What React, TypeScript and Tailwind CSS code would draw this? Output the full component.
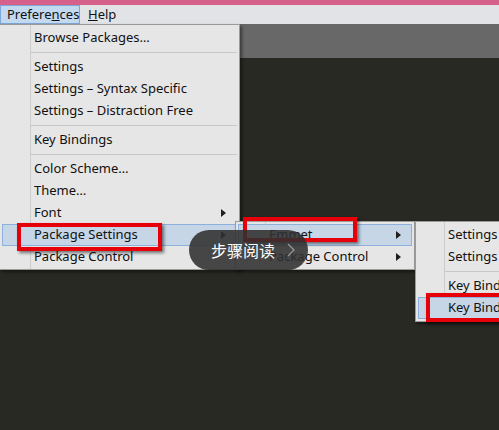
import React from 'react';

type Item =
  | { kind: 'sep' }
  | { kind: 'item'; label: string; arrow?: boolean; active?: boolean };

const Arrow: React.FC = () => (
  <svg width="5" height="8" viewBox="0 0 5 8" className="absolute right-[10px] top-1/2 -translate-y-1/2">
    <path d="M0 0 L5 4 L0 8 Z" fill="#1f1f1f" />
  </svg>
);

const Menu: React.FC<{ items: Item[]; col: number; className: string }> = ({ items, col, className }) => (
  <div className={`absolute bg-[#e6e6e6] border border-[#9a9a9a] shadow-[2px_2px_3px_rgba(0,0,0,0.45)] ${className}`}>
    {/* icon column divider */}
    <div className="absolute top-0 bottom-0 w-px bg-[#cdcdcd]" style={{ left: col }} />
    {items.map((it, i) =>
      it.kind === 'sep' ? (
        <div key={i} className="h-[7px] flex items-center mr-[2px]" style={{ marginLeft: col }}>
          <div className="h-px w-full bg-[#c8c8c8]" />
        </div>
      ) : (
        <div
          key={i}
          className={`relative h-[22px] flex items-center mx-[2px] ${
            it.active ? 'bg-[#c6d6e7] border border-[#8db0dc]' : 'border border-transparent'
          }`}
          style={{ paddingLeft: col + 1 }}
        >
          <span className="whitespace-nowrap">{it.label}</span>
          {it.arrow && <Arrow />}
        </div>
      )
    )}
  </div>
);

const mainItems: Item[] = [
  { kind: 'item', label: 'Browse Packages…' },
  { kind: 'sep' },
  { kind: 'item', label: 'Settings' },
  { kind: 'item', label: 'Settings – Syntax Specific' },
  { kind: 'item', label: 'Settings – Distraction Free' },
  { kind: 'sep' },
  { kind: 'item', label: 'Key Bindings' },
  { kind: 'sep' },
  { kind: 'item', label: 'Color Scheme…' },
  { kind: 'item', label: 'Theme…' },
  { kind: 'item', label: 'Font', arrow: true },
  { kind: 'item', label: 'Package Settings', arrow: true, active: true },
  { kind: 'item', label: 'Package Control' },
];

const subItems: Item[] = [
  { kind: 'item', label: 'Emmet', arrow: true, active: true },
  { kind: 'item', label: 'Package Control', arrow: true },
];

const emmetItems: Item[] = [
  { kind: 'item', label: 'Settings – Default' },
  { kind: 'item', label: 'Settings – User' },
  { kind: 'sep' },
  { kind: 'item', label: 'Key Bindings – Default' },
  { kind: 'item', label: 'Key Bindings – User', active: true },
];

const App: React.FC = () => {
  return (
    <div className="relative w-[499px] h-[430px] overflow-hidden bg-[#282923] text-[13px] text-[#111] font-['Segoe_UI','Noto_Sans',sans-serif] flex flex-col">
      {/* title strip */}
      <div className="h-[5px] bg-[#d5618b]" />
      {/* menubar */}
      <div className="h-[19px] bg-[#e2e3e7] flex items-stretch">
        <div className="w-[80px] bg-[#c3d9f0] border border-[#7fa8d6] flex items-center pl-[6px]">
          Prefere<span className="underline">n</span>ces
        </div>
        <div className="flex items-center pl-[8px]">
          <span className="underline">H</span>elp
        </div>
      </div>
      {/* tab band */}
      <div className="h-[34px] bg-[#686868]" />
      {/* editor */}
      <div className="flex-1 bg-[#282923]" />

      <Menu items={mainItems} col={30} className="left-[-1px] top-[24px] w-[241px] pt-[2px] pb-[1px]" />
      <Menu items={subItems} col={29} className="left-[235px] top-[221px] w-[180px] pt-[2px] pb-[1px]" />
      <Menu items={emmetItems} col={28} className="left-[415px] top-[221px] w-[170px] pt-[2px] pb-[2px]" />

      {/* red annotation boxes */}
      <div className="absolute left-[17px] top-[223px] w-[145px] h-[28px] border-4 border-[#e5000a] shadow-[2px_2px_3px_rgba(0,0,0,0.5)]" />
      <div className="absolute left-[243px] top-[217px] w-[114px] h-[25px] border-4 border-[#e5000a] shadow-[2px_2px_3px_rgba(0,0,0,0.5)]" />
      <div className="absolute left-[426px] top-[293px] w-[90px] h-[29px] border-4 border-[#e5000a] shadow-[2px_2px_3px_rgba(0,0,0,0.5)]" />

      {/* step-reading pill */}
      <div className="absolute left-[189px] top-[230px] w-[119px] h-[40px] rounded-full bg-[rgba(48,48,48,0.88)] flex items-center pl-[22px]">
        <span className="text-white text-[16px] font-['Noto_Sans_CJK_SC',sans-serif] leading-none">步骤阅读</span>
        <svg width="8" height="14" viewBox="0 0 8 14" className="ml-[12px]">
          <path d="M1 1 L7 7 L1 13" fill="none" stroke="#9a9a9a" strokeWidth="1.2" />
        </svg>
      </div>
    </div>
  );
};

export default App;
